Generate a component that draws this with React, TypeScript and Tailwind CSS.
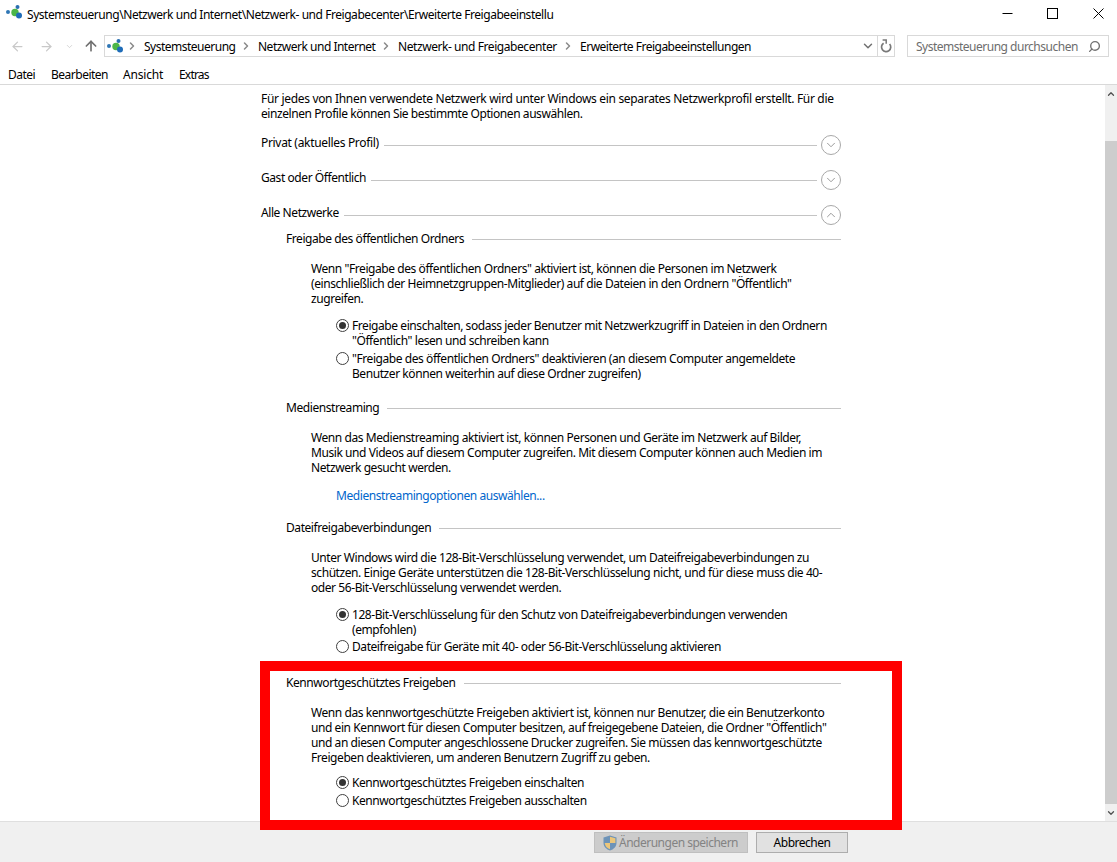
import type { ReactNode } from "react";
import { ChevronDown, ChevronRight, ChevronUp, ArrowLeft, ArrowRight, ArrowUp, Search } from "lucide-react";

function NetworkIcon() {
  return (
    <svg width="17" height="14" viewBox="0 0 17 14" className="shrink-0">
      <circle cx="2" cy="7" r="2" fill="#2f76b5" />
      <circle cx="9" cy="7.5" r="3.7" fill="#4cb648" />
      <circle cx="11.5" cy="2" r="2" fill="#2a6fb0" />
      <circle cx="13" cy="10.5" r="3" fill="#1f6cb8" />
    </svg>
  );
}

function Shield() {
  return (
    <svg width="14" height="16" viewBox="0 0 14 16" className="shrink-0">
      <path d="M7 0.5 L13.5 2.5 V8 C13.5 11.5 10.5 14.5 7 15.5 C3.5 14.5 0.5 11.5 0.5 8 V2.5 Z" fill="#6d93b8" />
      <path d="M7 1.8 L12.4 3.3 V8 H7 Z" fill="#ecc67a" />
      <path d="M7 8 H1.7 C2 11 4 13.3 7 14.3 Z" fill="#ecc67a" />
    </svg>
  );
}

function RefreshIcon() {
  return (
    <svg width="13" height="14" viewBox="0 0 13 14" fill="none" stroke="#787878" strokeWidth="1.7">
      <path d="M9.6 5 A4.6 4.6 0 1 1 3.6 4.2" />
      <path d="M2.6 1 H6.2 V4.8" strokeWidth="1.5" />
    </svg>
  );
}

function Crumb({ width, children }: { width: string; children: ReactNode }) {
  return (
    <>
      <span className="flex w-[14px] shrink-0">
        <ChevronRight size={12} strokeWidth={3} className="-ml-[4px] text-[#8a8a8a]" />
      </span>
      <span className={width + " shrink-0 whitespace-nowrap"}>{children}</span>
    </>
  );
}

function Radio({ checked, children }: { checked?: boolean; children: ReactNode }) {
  return (
    <div className="ml-[75px] flex items-start">
      <span className="mt-[1px] mr-[3px] flex h-[13px] w-[13px] shrink-0 items-center justify-center rounded-full border border-[#404040] bg-white">
        {checked && <span className="h-[7px] w-[7px] rounded-full bg-[#333333]" />}
      </span>
      <div>{children}</div>
    </div>
  );
}

function Heading({ title, state }: { title: ReactNode; state: "open" | "closed" }) {
  return (
    <div className="flex h-[20px] items-center">
      <span className="-mt-[6px] mr-[5px] whitespace-nowrap">{title}</span>
      <div className="h-px flex-1 bg-[#c4c4c4]" />
      <span className="ml-[4px] flex h-[20px] w-[20px] items-center justify-center rounded-full border border-[#a8a8a8] text-[#8c8c8c]">
        {state === "closed" ? <ChevronDown size={14} strokeWidth={1.5} /> : <ChevronUp size={14} strokeWidth={1.5} />}
      </span>
    </div>
  );
}

function SubHeading({ title }: { title: string }) {
  return (
    <div className="ml-[25px] flex h-[15px] items-center">
      <span className="mr-[8px] whitespace-nowrap">{title}</span>
      <div className="mt-[1px] h-px flex-1 bg-[#c4c4c4]" />
    </div>
  );
}

export default function App() {
  return (
    <div className="relative flex h-[862px] w-[1117px] flex-col overflow-hidden bg-white font-['Noto_Sans',sans-serif] text-[12px] leading-[15px] tracking-[-0.43px] text-black">
      {/* title bar */}
      <div className="flex h-[28px] shrink-0 items-center pl-[6px]">
        <span className="-mt-[4px] flex">
          <NetworkIcon />
        </span>
        <span className="ml-[4px] flex-1 whitespace-nowrap tracking-[-0.45px]">
          Systemsteuerung\Netzwerk und Internet\Netzwerk- und Freigabecenter\Erweiterte Freigabeeinstellu
        </span>
        <div className="-mt-[2px] flex items-center">
          <svg width="11" height="11" viewBox="0 0 11 11" stroke="#000" fill="none">
            <path d="M0.5 5.5 H10.5" />
          </svg>
          <svg width="11" height="11" viewBox="0 0 11 11" stroke="#000" fill="none" className="ml-[34px]">
            <rect x="0.5" y="0.5" width="10" height="10" />
          </svg>
          <svg width="11" height="11" viewBox="0 0 11 11" stroke="#000" fill="none" className="mr-[13px] ml-[35px]">
            <path d="M0.5 0.5 L10.5 10.5 M10.5 0.5 L0.5 10.5" />
          </svg>
        </div>
      </div>

      {/* address bar */}
      <div className="mt-[7px] flex h-[22px] shrink-0 items-center tracking-[-0.5px]">
        <ArrowLeft size={15} className="ml-[10px] text-[#c9c9c9]" />
        <ArrowRight size={15} className="ml-[14px] text-[#c9c9c9]" />
        <ChevronDown size={9} className="ml-[11px] text-[#c9c9c9]" />
        <ArrowUp size={16} strokeWidth={2.5} className="ml-[9px] text-[#707070]" />
        <div className="ml-[5px] flex h-[22px] w-[791px] items-center border border-[#d9d9d9] pl-[2px]">
          <NetworkIcon />
          <div className="ml-[6px] flex flex-1 items-center">
            <Crumb width="w-[100px]">Systemsteuerung</Crumb>
            <Crumb width="w-[126px]">Netzwerk und Internet</Crumb>
            <Crumb width="w-[168px]">
              <span className="tracking-[-0.43px]">Netzwerk- und Freigabecenter</span>
            </Crumb>
            <Crumb width="w-[280px]">Erweiterte Freigabeeinstellungen</Crumb>
          </div>
          <ChevronDown size={14} strokeWidth={2.5} className="mr-[2px] text-[#707070]" />
          <div className="flex h-full w-[17px] items-center justify-center border-l border-[#d9d9d9]">
            <RefreshIcon />
          </div>
        </div>
        <div className="ml-[12px] flex h-[22px] w-[202px] items-center justify-between border border-[#d9d9d9] pr-[7px] pl-[8px] text-[#6d6d6d]">
          <span className="whitespace-nowrap">Systemsteuerung durchsuchen</span>
          <Search size={13} strokeWidth={2.5} className="-scale-x-100 text-[#707070]" />
        </div>
      </div>

      {/* menu */}
      <div className="mt-[9px] flex h-[19px] shrink-0 items-center border-b border-[#d9d9d9] pb-[2px] pl-[8px] tracking-[-0.5px]">
        <span className="w-[43px]">Datei</span>
        <span className="w-[72px]">Bearbeiten</span>
        <span className="w-[56px] tracking-[-0.2px]">Ansicht</span>
        <span className="tracking-[-0.8px]">Extras</span>
      </div>

      {/* content */}
      <div className="flex min-h-0 flex-1">
        <div className="w-[261px] shrink-0" />
        <div className="w-[580px] pt-[6px] whitespace-nowrap">
          <p>
            <span className="tracking-[-0.32px]">
              Für jedes von Ihnen verwendete Netzwerk wird unter Windows ein separates Netzwerkprofil erstellt. Für die
            </span>
            <br />
            einzelnen Profile können Sie bestimmte Optionen auswählen.
          </p>
          <div className="mt-[14px]">
            <Heading title={<span className="tracking-[-0.32px]">Privat (aktuelles Profil)</span>} state="closed" />
          </div>
          <div className="mt-[15px]">
            <Heading title="Gast oder Öffentlich" state="closed" />
          </div>
          <div className="mt-[15px]">
            <Heading title="Alle Netzwerke" state="open" />
          </div>

          <div className="mt-[6px]">
            <SubHeading title="Freigabe des öffentlichen Ordners" />
          </div>
          <p className="mt-[15px] ml-[50px]">
            Wenn "Freigabe des öffentlichen Ordners" aktiviert ist, können die Personen im Netzwerk
            <br />
            (einschließlich der Heimnetzgruppen-Mitglieder) auf die Dateien in den Ordnern "Öffentlich"
            <br />
            zugreifen.
          </p>
          <div className="mt-[12px] flex flex-col gap-[3px]">
            <Radio checked>
              Freigabe einschalten, sodass jeder Benutzer mit Netzwerkzugriff in Dateien in den Ordnern
              <br />
              "Öffentlich" lesen und schreiben kann
            </Radio>
            <Radio>
              "Freigabe des öffentlichen Ordners" deaktivieren (an diesem Computer angemeldete
              <br />
              Benutzer können weiterhin auf diese Ordner zugreifen)
            </Radio>
          </div>

          <div className="mt-[19px]">
            <SubHeading title="Medienstreaming" />
          </div>
          <p className="mt-[15px] ml-[50px]">
            Wenn das Medienstreaming aktiviert ist, können Personen und Geräte im Netzwerk auf Bilder,
            <br />
            Musik und Videos auf diesem Computer zugreifen. Mit diesem Computer können auch Medien im
            <br />
            Netzwerk gesucht werden.
          </p>
          <p className="mt-[13px] ml-[75px] text-[#0066cc]">Medienstreamingoptionen auswählen...</p>

          <div className="mt-[17px]">
            <SubHeading title="Dateifreigabeverbindungen" />
          </div>
          <p className="mt-[15px] ml-[50px]">
            Unter Windows wird die 128-Bit-Verschlüsselung verwendet, um Dateifreigabeverbindungen zu
            <br />
            schützen. Einige Geräte unterstützen die 128-Bit-Verschlüsselung nicht, und für diese muss die 40-
            <br />
            oder 56-Bit-Verschlüsselung verwendet werden.
          </p>
          <div className="mt-[12px] flex flex-col gap-[2px]">
            <Radio checked>
              128-Bit-Verschlüsselung für den Schutz von Dateifreigabeverbindungen verwenden
              <br />
              (empfohlen)
            </Radio>
            <Radio>Dateifreigabe für Geräte mit 40- oder 56-Bit-Verschlüsselung aktivieren</Radio>
          </div>

          <div className="mt-[21px]">
            <SubHeading title="Kennwortgeschütztes Freigeben" />
          </div>
          <p className="mt-[15px] ml-[50px]">
            Wenn das kennwortgeschützte Freigeben aktiviert ist, können nur Benutzer, die ein Benutzerkonto
            <br />
            und ein Kennwort für diesen Computer besitzen, auf freigegebene Dateien, die Ordner "Öffentlich"
            <br />
            und an diesen Computer angeschlossene Drucker zugreifen. Sie müssen das kennwortgeschützte
            <br />
            Freigeben deaktivieren, um anderen Benutzern Zugriff zu geben.
          </p>
          <div className="mt-[10px] flex flex-col gap-[3px]">
            <Radio checked>Kennwortgeschütztes Freigeben einschalten</Radio>
            <Radio>Kennwortgeschütztes Freigeben ausschalten</Radio>
          </div>
        </div>
        <div className="flex-1" />

        {/* scrollbar */}
        <div className="flex w-[12px] shrink-0 flex-col bg-[#f0f0f0]">
          <div className="flex h-[17px] items-center justify-center text-[#505050]">
            <ChevronUp size={10} strokeWidth={3} />
          </div>
          <div className="mt-[39px] h-[663px] bg-[#cdcdcd]" />
          <div className="flex flex-1 items-center justify-center text-[#505050]">
            <ChevronDown size={10} strokeWidth={3} />
          </div>
        </div>
      </div>

      {/* footer */}
      <div className="flex h-[41px] shrink-0 items-start justify-end gap-[8px] border-t border-[#dfdfdf] bg-[#f0f0f0] pt-[10px] pr-[269px] tracking-[-0.5px]">
        <div className="flex h-[21px] w-[154px] items-center border border-[#bfbfbf] bg-[#cccccc] pl-[8px] text-[#838383]">
          <Shield />
          <span className="ml-[2px] whitespace-nowrap">Änderungen speichern</span>
        </div>
        <div className="flex h-[21px] w-[92px] items-center justify-center border border-[#adadad] bg-[#e1e1e1] text-black">
          Abbrechen
        </div>
      </div>

      {/* red highlight */}
      <div className="pointer-events-none absolute top-[661px] left-[260px] h-[169px] w-[642px] border-[10px] border-[#ff0000]" />
    </div>
  );
}
